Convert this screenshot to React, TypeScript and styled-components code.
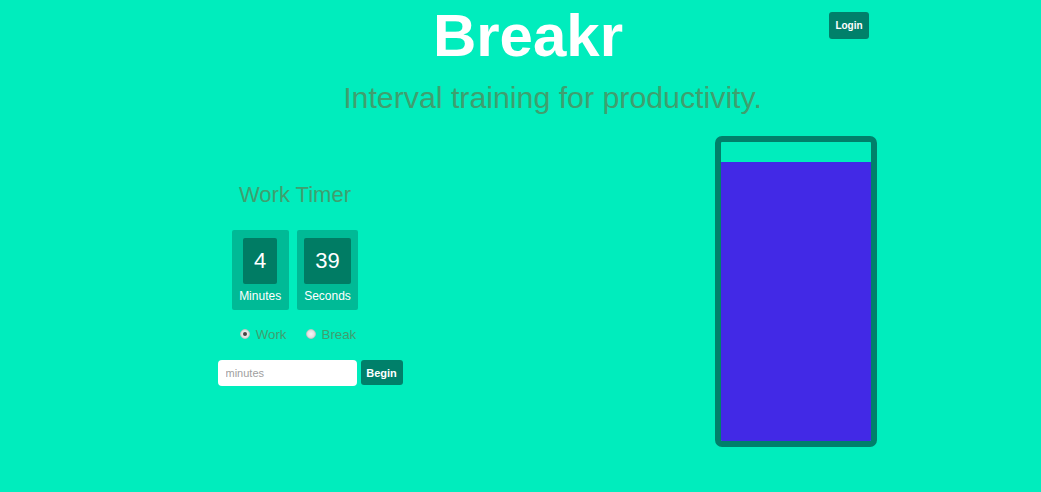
import React from "react";
import styled, { createGlobalStyle } from "styled-components";

const GlobalStyle = createGlobalStyle`
  html, body {
    margin: 0;
    padding: 0;
    background: #00edbd;
    font-family: "Liberation Sans", Arial, sans-serif;
  }
`;

const Page = styled.div`
  width: 1041px;
  height: 492px;
  background: #00edbd;
  overflow: hidden;
`;

const Header = styled.header`
  display: grid;
  grid-template-columns: 1fr auto 1fr;
  align-items: start;
`;

const Title = styled.h1`
  grid-column: 2;
  margin: 6px 0 0 15px;
  font-size: 60px;
  line-height: 1;
  font-weight: 700;
  color: #ffffff;
`;

const LoginCell = styled.div`
  grid-column: 3;
  display: flex;
  justify-content: flex-end;
  padding: 12px 172px 0 0;
`;

const DarkButton = styled.button<{ $w: number; $h: number; $size: number }>`
  width: ${(p) => p.$w}px;
  height: ${(p) => p.$h}px;
  padding: 0;
  border: none;
  border-radius: 3px;
  background: #00806a;
  color: #ffffff;
  font-family: "Liberation Sans", Arial, sans-serif;
  font-weight: 700;
  font-size: ${(p) => p.$size}px;
  cursor: pointer;
`;

const Subtitle = styled.h2`
  margin: 17px 0 0 0;
  padding-left: 64px;
  text-align: center;
  font-size: 30.3px;
  line-height: 1;
  font-weight: 400;
  color: #3f9f6f;
`;

const Main = styled.main`
  display: flex;
  align-items: flex-start;
  margin-top: 23px;
  padding-left: 200px;
`;

const TimerColumn = styled.section`
  width: 190px;
  display: flex;
  flex-direction: column;
  align-items: center;
`;

const TimerTitle = styled.h3`
  margin: 48px 0 0 0;
  font-size: 22px;
  line-height: 1;
  font-weight: 400;
  color: #3f9f6f;
`;

const Clock = styled.div`
  display: flex;
  gap: 8px;
  margin-top: 24px;
`;

const Unit = styled.div`
  height: 80px;
  box-sizing: border-box;
  padding: 8px 7.5px 0;
  border-radius: 2px;
  background: #00ba96;
  display: flex;
  flex-direction: column;
  align-items: center;
`;

const Digits = styled.div`
  height: 46px;
  padding: 0 11px;
  border-radius: 2px;
  background: #007c64;
  color: #ffffff;
  font-size: 22px;
  line-height: 46px;
`;

const UnitLabel = styled.div`
  margin-top: 5px;
  color: #ffffff;
  font-size: 12px;
  line-height: 14px;
`;

const ModeRow = styled.div`
  display: flex;
  align-items: center;
  gap: 19px;
  margin-top: 16px;
  height: 16px;
  padding-left: 6px;
`;

const ModeOption = styled.label`
  display: flex;
  align-items: center;
  gap: 6px;
  font-size: 13.3px;
  color: #3f9f6f;
`;

const Radio = styled.input`
  appearance: none;
  margin: 0;
  width: 8px;
  height: 8px;
  border-radius: 50%;
  background: radial-gradient(circle, #f6f6f6 0%, #d4d4d4 100%);
  border: 1px solid #c4c4c4;
  box-sizing: content-box;
  display: grid;
  place-items: center;
  &:checked::after {
    content: "";
    width: 4px;
    height: 4px;
    border-radius: 50%;
    background: #444;
  }
`;

const Form = styled.form`
  display: flex;
  gap: 4px;
  margin-top: 18px;
  padding-left: 30px;
`;

const MinutesInput = styled.input`
  width: 139px;
  height: 26px;
  box-sizing: border-box;
  border: none;
  border-radius: 4px;
  background: #ffffff;
  padding: 0 8px;
  font-family: "Liberation Sans", Arial, sans-serif;
  font-size: 11px;
  outline: none;
  &::placeholder {
    color: #a0a0a0;
  }
`;

const Glass = styled.div`
  margin: 0 0 0 325px;
  width: 162px;
  height: 311px;
  box-sizing: border-box;
  border: 6px solid #00806a;
  border-radius: 7px;
  display: flex;
  flex-direction: column;
  justify-content: flex-end;
  overflow: hidden;
`;

const Fill = styled.div`
  background: #4229e6;
  width: 100%;
`;

export default function App() {
  const fillPercent = (279 / 299) * 100;
  return (
    <Page>
      <GlobalStyle />
      <Header>
        <Title>Breakr</Title>
        <LoginCell>
          <DarkButton $w={40} $h={27} $size={10}>Login</DarkButton>
        </LoginCell>
      </Header>
      <Subtitle>Interval training for productivity.</Subtitle>
      <Main>
        <TimerColumn>
          <TimerTitle>Work Timer</TimerTitle>
          <Clock>
            <Unit>
              <Digits>4</Digits>
              <UnitLabel>Minutes</UnitLabel>
            </Unit>
            <Unit>
              <Digits>39</Digits>
              <UnitLabel>Seconds</UnitLabel>
            </Unit>
          </Clock>
          <ModeRow>
            <ModeOption>
              <Radio type="radio" name="mode" defaultChecked />
              Work
            </ModeOption>
            <ModeOption>
              <Radio type="radio" name="mode" />
              Break
            </ModeOption>
          </ModeRow>
          <Form onSubmit={(e) => e.preventDefault()}>
            <MinutesInput type="text" placeholder="minutes" />
            <DarkButton type="submit" $w={42} $h={25} $size={11}>
              Begin
            </DarkButton>
          </Form>
        </TimerColumn>
        <Glass>
          <Fill style={{ height: `${fillPercent}%` }} />
        </Glass>
      </Main>
    </Page>
  );
}
